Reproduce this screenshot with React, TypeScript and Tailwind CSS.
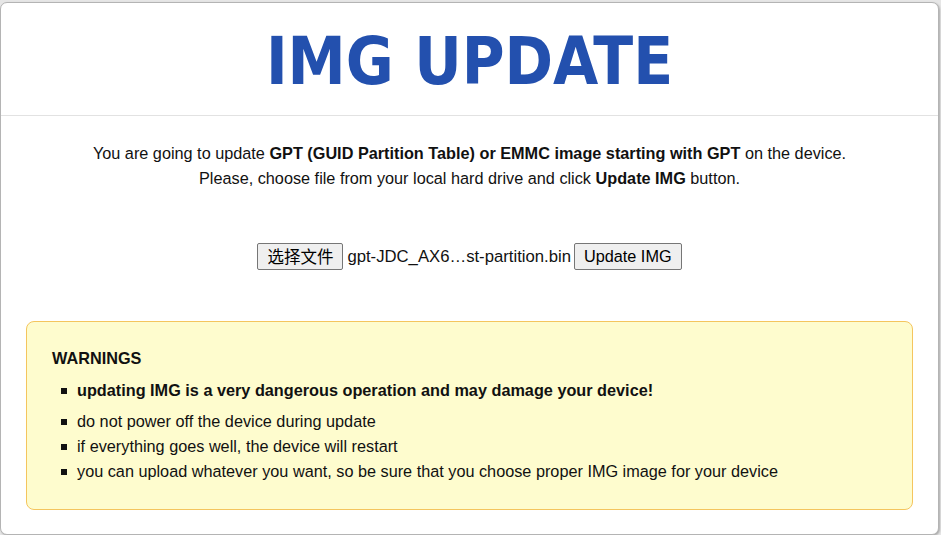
import React from 'react';

const warnings = [
  'do not power off the device during update',
  'if everything goes well, the device will restart',
  'you can upload whatever you want, so be sure that you choose proper IMG image for your device',
];

const Item: React.FC<{ bold?: boolean; children: React.ReactNode }> = ({ bold, children }) => (
  <li className={`flex items-start ${bold ? 'font-bold' : ''}`}>
    <span className="mt-[10px] ml-[-16px] mr-[10px] w-[6px] h-[6px] bg-[#111] shrink-0" />
    <span>{children}</span>
  </li>
);

const App: React.FC = () => {
  return (
    <div className="w-[941px] h-[535px] bg-[#e6e6e6] pt-[2px] overflow-hidden font-['Liberation_Sans',Arial,sans-serif] text-[16.25px] leading-[25px] text-black">
      <div className="w-[939px] bg-white border border-[#b4b4b4] rounded-[7px] shadow-[1px_1px_2px_rgba(0,0,0,0.25)]">
        {/* Header */}
        <div className="h-[113px] flex items-center justify-center border-b border-[#e2e2e2]">
          <h1 className="font-['DejaVu_Sans_Condensed','DejaVu_Sans',sans-serif] font-bold text-[65px] leading-none text-[#2350ae] [font-stretch:condensed] pt-[4px]">
            IMG UPDATE
          </h1>
        </div>

        {/* Body */}
        <div className="px-[25px] pt-[25px] pb-[24px]">
          <div className="text-center text-[#111]">
            <p>
              You are going to update <b>GPT (GUID Partition Table) or EMMC image starting with GPT</b> on the device.
            </p>
            <p>
              Please, choose file from your local hard drive and click <b>Update IMG</b> button.
            </p>
          </div>

          <div className="mt-[52px] flex items-center justify-center h-[27px]">
            <button className="h-[27px] px-[9px] bg-[#efefef] border border-[#767676] rounded-[2px] text-[16.5px] leading-none font-['Noto_Sans_CJK_SC',sans-serif]">
              选择文件
            </button>
            <span className="ml-[4px] text-[16.7px] text-[#111]">gpt-JDC_AX6…st-partition.bin</span>
            <button className="ml-[3px] h-[27px] px-[9px] bg-[#efefef] border border-[#767676] rounded-[2px] leading-none">
              Update IMG
            </button>
          </div>

          <div className="mt-[51px] bg-[#fefcce] border border-[#f4c55e] rounded-[8px] px-[25px] pt-[24px] pb-[25px] text-[#111]">
            <p className="font-bold">WARNINGS</p>
            <ul className="mt-[7px] pl-[25px]">
              <Item bold>updating IMG is a very dangerous operation and may damage your device!</Item>
            </ul>
            <ul className="mt-[6px] pl-[25px]">
              {warnings.map((w) => (
                <Item key={w}>{w}</Item>
              ))}
            </ul>
          </div>
        </div>
      </div>
    </div>
  );
};

export default App;
